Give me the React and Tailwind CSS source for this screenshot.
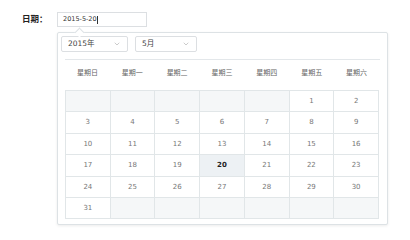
import { ChevronDown } from 'lucide-react'

const weekDays = ['星期日', '星期一', '星期二', '星期三', '星期四', '星期五', '星期六']

// May 2015 starts on Friday
const cells = [
  null, null, null, null, null, 1, 2,
  3, 4, 5, 6, 7, 8, 9,
  10, 11, 12, 13, 14, 15, 16,
  17, 18, 19, 20, 21, 22, 23,
  24, 25, 26, 27, 28, 29, 30,
  31, null, null, null, null, null, null,
]

function Select({ value, width }) {
  return (
    <div className={`${width} h-[16px] border border-[#dcdfe2] rounded-[2px] bg-white flex items-center justify-between pl-[6px] pr-[6px] text-[7.5px] text-[#444]`}>
      <span>{value}</span>
      <ChevronDown size={8} strokeWidth={1.5} className="text-[#999]" />
    </div>
  )
}

export default function App() {
  const rows = []
  for (let i = 0; i < cells.length; i += 7) rows.push(cells.slice(i, i + 7))

  return (
    <div
      className="w-[410px] h-[240px] bg-white pt-[12px] pl-[22px] flex items-start gap-[7px]"
      style={{ fontFamily: '"DejaVu Sans", "Noto Sans CJK SC", sans-serif' }}
    >
      <div className="w-[28px] h-[15px] leading-[15px] text-[8.5px] font-bold text-[#222]">日期：</div>

      <div>
        <div className="w-[90px] h-[15px] border border-[#dcdfe2] flex items-center pl-[5px] text-[6.5px] text-[#333]">
          2015-5-20<span className="w-px h-[8px] bg-[#333]"></span>
        </div>

        <div className="relative mt-[5px] w-[331px] h-[193px] border border-[#dde2e5] rounded-[2px] bg-white shadow-[0_1px_3px_rgba(0,0,0,0.08)]">
          <div className="absolute left-[18px] -top-[4px] w-[7px] h-[7px] bg-white border-t border-l border-[#dde2e5] rotate-45"></div>

          <div className="flex gap-[7px] pt-[3px] pl-[3px]">
            <Select value="2015年" width="w-[67px]" />
            <Select value="5月" width="w-[62px]" />
          </div>

          <div className="ml-[7px] mr-[7px] mt-[7px] border-t border-[#e3e7ea]"></div>

          <div className="ml-[7px] w-[314px] h-[30px] grid grid-cols-7 items-center pb-[3px]">
            {weekDays.map((d) => (
              <div key={d} className="text-center text-[7px] text-[#666]">{d}</div>
            ))}
          </div>

          <table className="ml-[7px] w-[314px] table-fixed border-collapse">
            <tbody>
              {rows.map((row, ri) => (
                <tr key={ri}>
                  {row.map((n, ci) => (
                    <td
                      key={ci}
                      className={`h-[21.4px] border border-[#e1e6e8] text-center text-[7px] p-0 ${
                        n === null ? 'bg-[#f5f7f8]' : n === 20 ? 'bg-[#edf1f4] font-bold text-[#222]' : 'text-[#777]'
                      }`}
                    >
                      {n}
                    </td>
                  ))}
                </tr>
              ))}
            </tbody>
          </table>
        </div>
      </div>
    </div>
  )
}
